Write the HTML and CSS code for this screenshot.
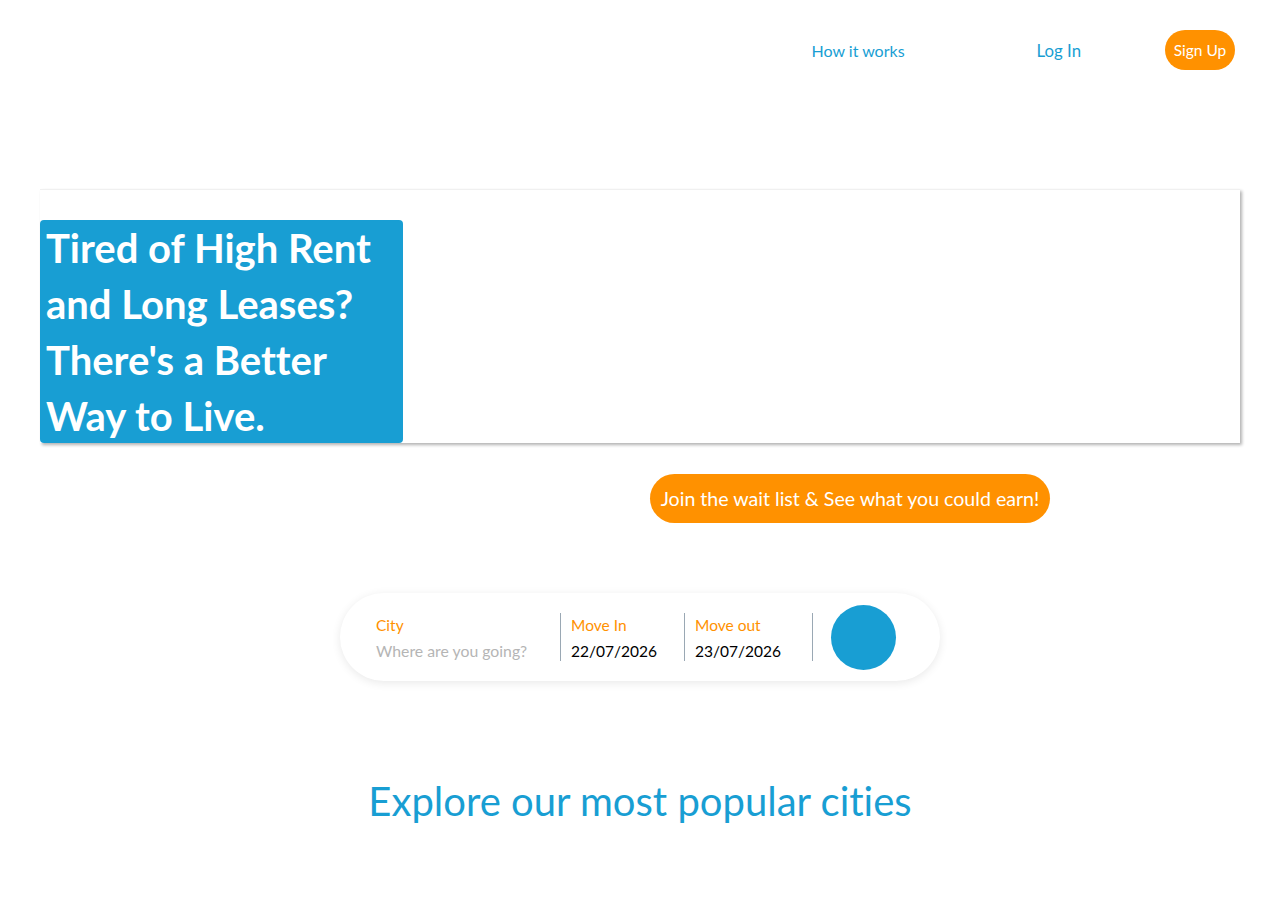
FILE: index.html
```html
<!DOCTYPE html>
<html lang="en">
<head>
<meta charset="utf-8">
<title>Home</title>
<link rel="stylesheet" href="styles.css">
</head>
<body>
<header class="nav">
  <a class="nav-link how" href="#">How it works</a>
  <a class="nav-link login" href="#">Log In</a>
  <a class="signup" href="#">Sign Up</a>
</header>
<main>
  <section class="hero">
    <h1 class="hero-title">Tired of High Rent and Long Leases? There's a Better Way to Live.</h1>
  </section>
  <div class="cta-row">
    <a class="cta" href="#">Join the wait list &amp; See what you could earn!</a>
  </div>
  <div class="search-row">
    <form class="search">
      <div class="field city">
        <label>City</label>
        <span class="placeholder">Where are you going?</span>
      </div>
      <div class="field date">
        <label>Move In</label>
        <span class="value">22/07/2026</span>
      </div>
      <div class="field date out">
        <label>Move out</label>
        <span class="value">23/07/2026</span>
      </div>
      <div class="go-wrap"><button type="button" class="go"></button></div>
    </form>
  </div>
  <h2 class="explore">Explore our most popular cities</h2>
</main>
</body>
</html>
```
FILE: styles.css
```css
* { box-sizing: border-box; }
body {
  margin: 0;
  font-family: Lato, "Open Sans", sans-serif;
  font-variant-ligatures: none;
  background: #fff;
}
a { text-decoration: none; }
.nav {
  display: flex;
  align-items: center;
  justify-content: flex-end;
  height: 100px;
  padding: 0 45px 0 0;
}
.nav-link {
  color: #189ed3;
}
.how { font-size: 16px; margin-right: 132px; }
.login { font-size: 16.8px; margin-right: 84px; }
.signup {
  display: flex;
  align-items: center;
  justify-content: center;
  width: 70px;
  height: 40px;
  border-radius: 20px;
  background: #ff9100;
  color: #fff;
  font-size: 15.5px;
}
.hero {
  margin: 89px 40px 0 40px;
  height: 254px;
  padding-top: 30px;
  background: #fff;
  border-top: 1px solid #f0f0f0;
  box-shadow: 2px 2px 3px rgba(0,0,0,0.3);
}
.hero-title {
  margin: 0;
  width: 363px;
  height: 223px;
  background: #189ed3;
  border-radius: 4px;
  color: #fff;
  font-size: 40px;
  font-weight: 700;
  line-height: 56px;
  padding: 0 6px;
}
.cta-row {
  display: flex;
  padding-left: 650px;
  margin-top: 31px;
}
.cta {
  display: flex;
  align-items: center;
  justify-content: center;
  width: 400px;
  height: 49px;
  border-radius: 25px;
  background: #ff9100;
  color: #fff;
  font-size: 19.6px;
  white-space: nowrap;
}
.search-row {
  display: flex;
  justify-content: center;
  margin-top: 70px;
}
.search {
  display: flex;
  align-items: center;
  width: 600px;
  height: 88px;
  border-radius: 44px;
  background: #fff;
  box-shadow: 0 2px 10px rgba(0,0,0,0.09);
  padding-left: 36px;
}
.field {
  display: flex;
  flex-direction: column;
  height: 48px;
  justify-content: center;
}
.field label {
  color: #ff9100;
  font-size: 15.5px;
  line-height: 24px;
}
.city { width: 184px; padding-top: 1px; }
.city label { line-height: 25px; }
.placeholder { color: #b5b5b5; font-size: 15.8px; line-height: 25px; }
.date {
  border-left: 1px solid #9aa8b4;
  padding-left: 10px;
  width: 124px;
  padding-top: 3px;
}
.date .value { color: #000; font-size: 15.5px; line-height: 28px; }
.out { width: 128px; }
.go-wrap {
  border-left: 1px solid #9aa8b4;
  height: 48px;
  display: flex;
  align-items: center;
  padding-left: 18px;
}
.go {
  width: 65px;
  height: 65px;
  border-radius: 50%;
  border: none;
  background: #189ed3;
  padding: 0;
}
.explore {
  margin: 94px 0 0;
  text-align: center;
  color: #189ed3;
  font-size: 40px;
  font-weight: 400;
  line-height: 52px;
}
```
